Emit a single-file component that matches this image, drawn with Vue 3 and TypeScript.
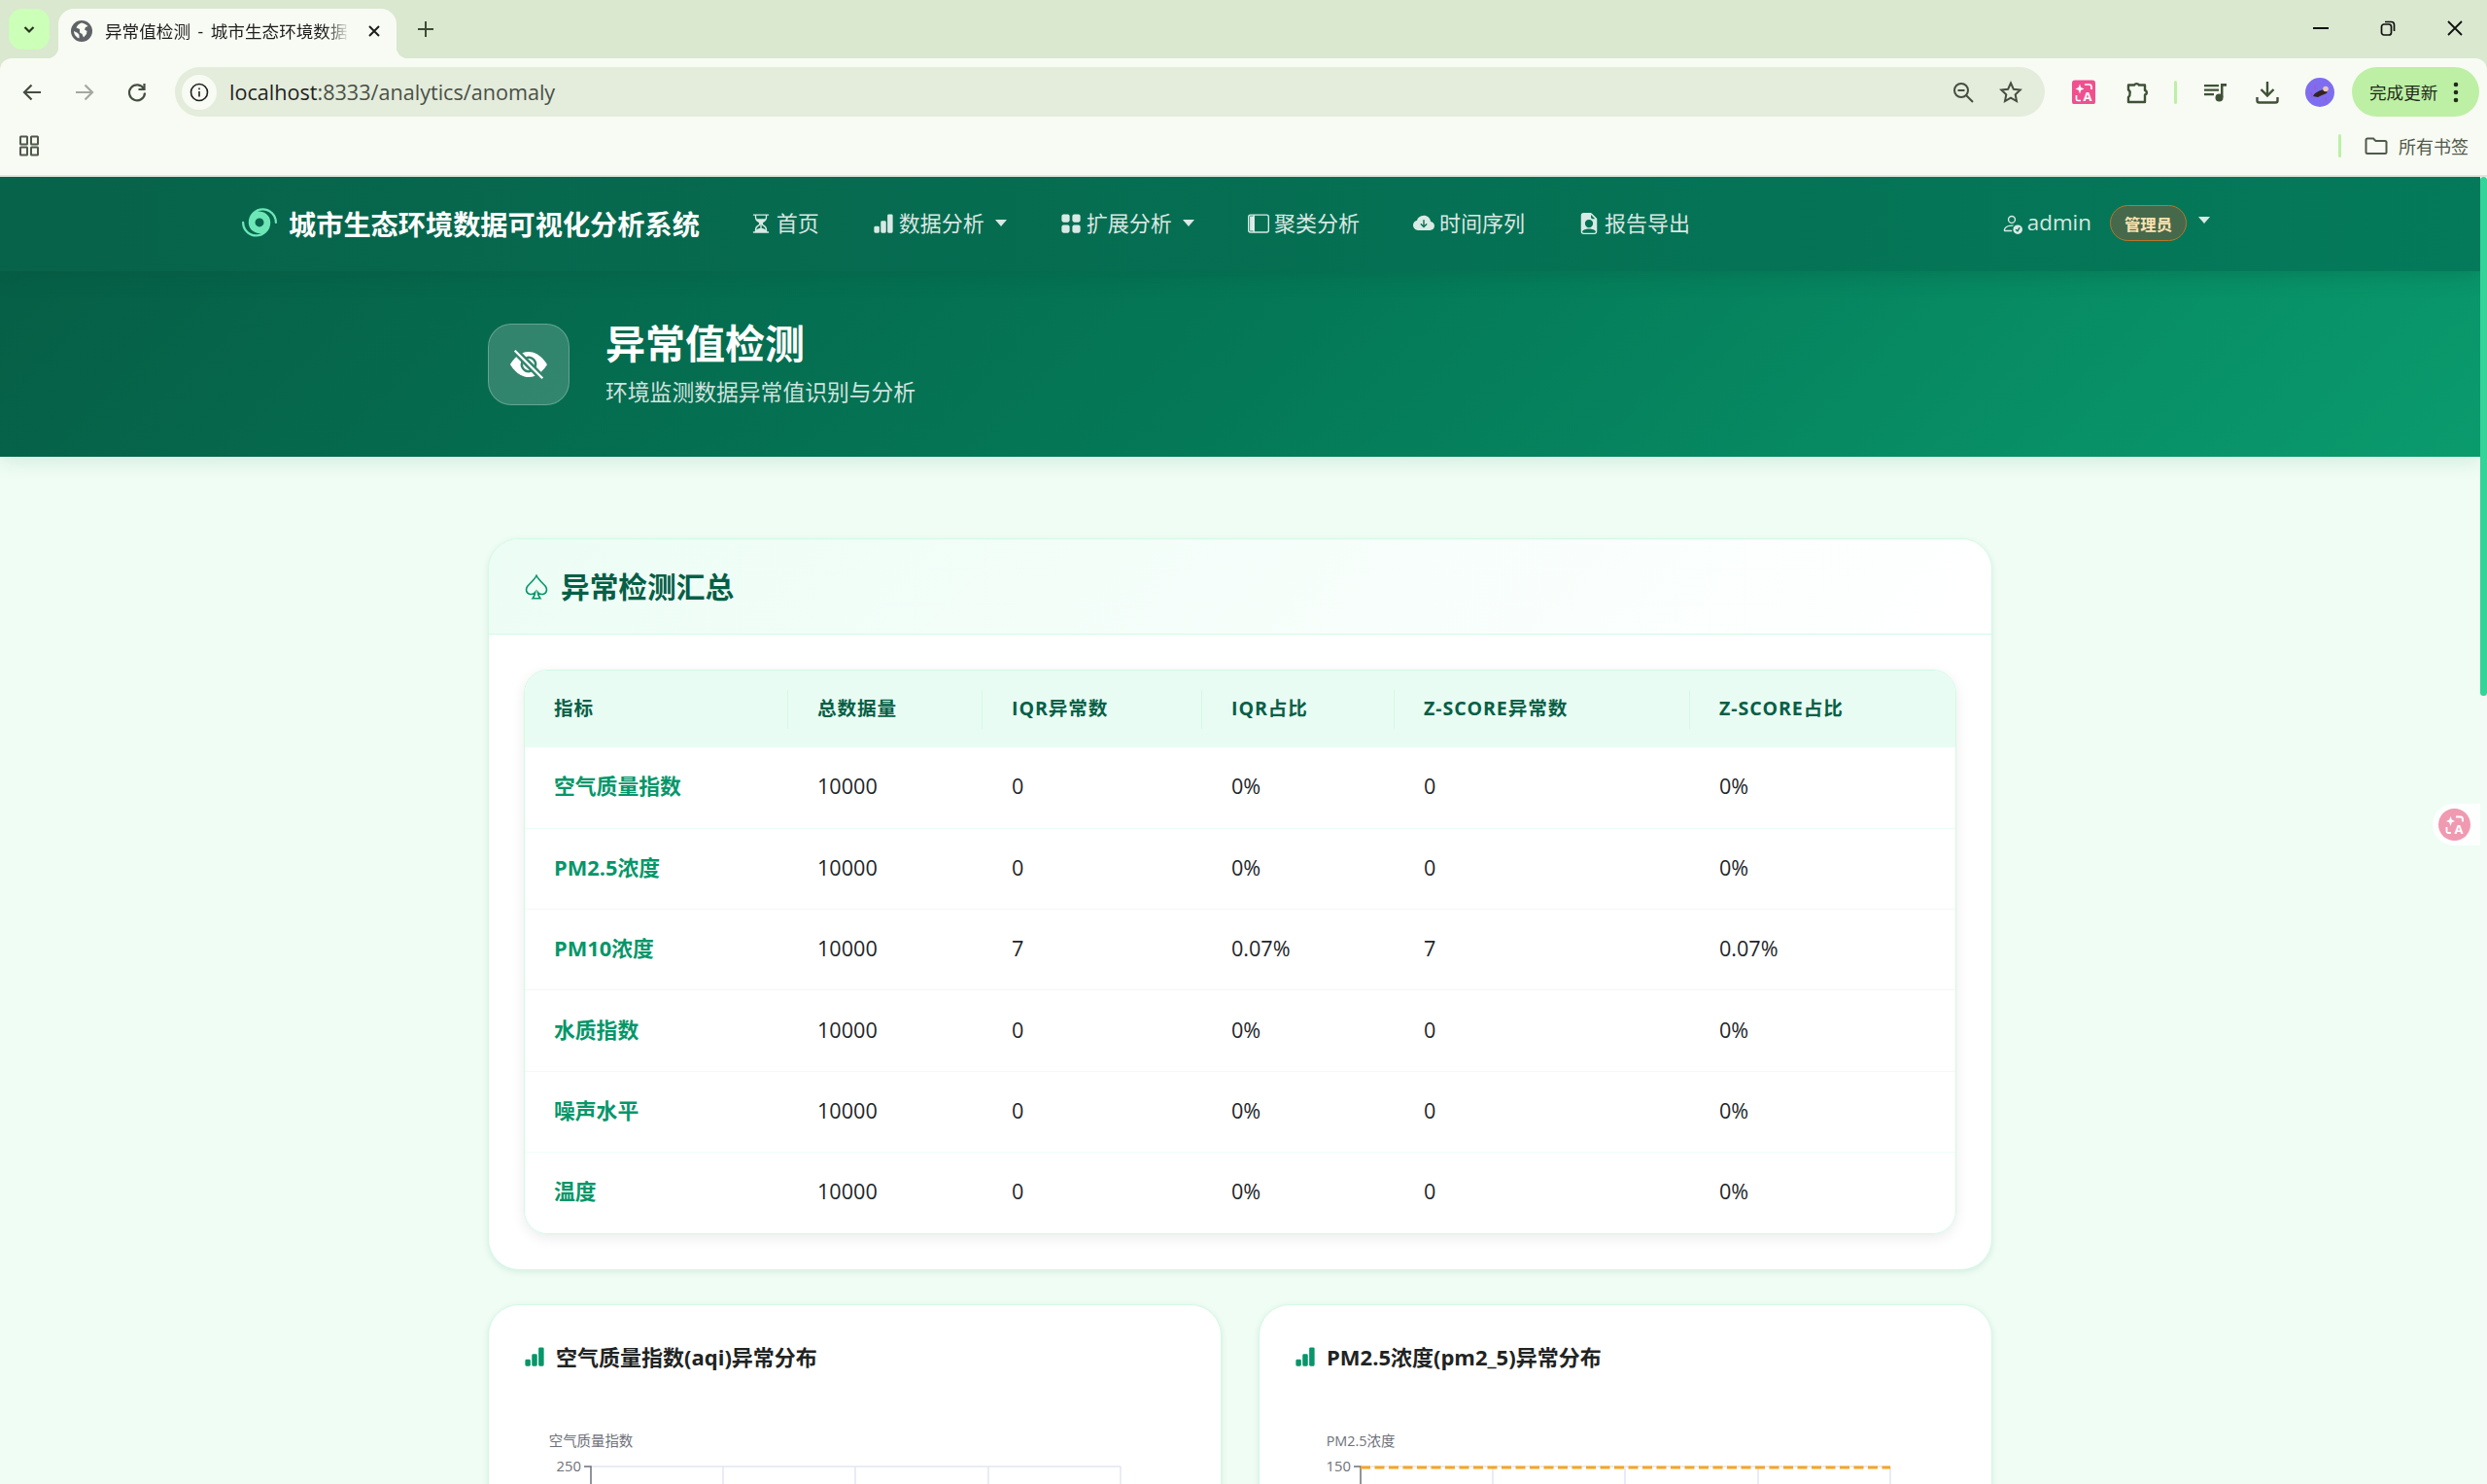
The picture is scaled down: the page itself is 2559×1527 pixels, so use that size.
<script setup lang="ts">
interface NavItem {
  label: string
  icon: string[]
  caret?: boolean
}

const icons = {
  hourglass: ['M2.5 15a.5.5 0 1 1 0-1h1v-1a4.5 4.5 0 0 1 2.557-4.06c.29-.139.443-.377.443-.59v-.7c0-.213-.154-.451-.443-.59A4.5 4.5 0 0 1 3.5 3V2h-1a.5.5 0 0 1 0-1h11a.5.5 0 0 1 0 1h-1v1a4.5 4.5 0 0 1-2.557 4.06c-.29.139-.443.377-.443.59v.7c0 .213.154.451.443.59A4.5 4.5 0 0 1 12.5 13v1h1a.5.5 0 0 1 0 1zm2-13v1c0 .537.12 1.045.337 1.5h6.326c.216-.455.337-.963.337-1.5V2zm3 6.35c0 .701-.478 1.236-1.011 1.492A3.5 3.5 0 0 0 4.5 13s.866-1.299 3-1.48zm1 0v3.17c2.134.181 3 1.48 3 1.48a3.5 3.5 0 0 0-1.989-3.158C8.978 9.586 8.5 9.052 8.5 8.351z'],
  bars: ['M1 11a1 1 0 0 1 1-1h2a1 1 0 0 1 1 1v3a1 1 0 0 1-1 1H2a1 1 0 0 1-1-1zm5-4a1 1 0 0 1 1-1h2a1 1 0 0 1 1 1v7a1 1 0 0 1-1 1H7a1 1 0 0 1-1-1zm5-5a1 1 0 0 1 1-1h2a1 1 0 0 1 1 1v12a1 1 0 0 1-1 1h-2a1 1 0 0 1-1-1z'],
  grid: ['M1 2.5A1.5 1.5 0 0 1 2.5 1h3A1.5 1.5 0 0 1 7 2.5v3A1.5 1.5 0 0 1 5.5 7h-3A1.5 1.5 0 0 1 1 5.5zm8 0A1.5 1.5 0 0 1 10.5 1h3A1.5 1.5 0 0 1 15 2.5v3A1.5 1.5 0 0 1 13.5 7h-3A1.5 1.5 0 0 1 9 5.5zm-8 8A1.5 1.5 0 0 1 2.5 9h3A1.5 1.5 0 0 1 7 10.5v3A1.5 1.5 0 0 1 5.5 15h-3A1.5 1.5 0 0 1 1 13.5zm8 0A1.5 1.5 0 0 1 10.5 9h3a1.5 1.5 0 0 1 1.5 1.5v3a1.5 1.5 0 0 1-1.5 1.5h-3A1.5 1.5 0 0 1 9 13.5z'],
  sidebar: ['M0 3a2 2 0 0 1 2-2h12a2 2 0 0 1 2 2v10a2 2 0 0 1-2 2H2a2 2 0 0 1-2-2zm5-1v12h9a1 1 0 0 0 1-1V3a1 1 0 0 0-1-1zM4 2H2a1 1 0 0 0-1 1v10a1 1 0 0 0 1 1h2z', 'M1.5 2.5h3v11h-3z'],
  cloud: ['M8 2a5.53 5.53 0 0 0-3.594 1.342c-.766.66-1.321 1.52-1.464 2.383C1.266 6.095 0 7.555 0 9.318 0 11.366 1.708 13 3.781 13h8.906C14.502 13 16 11.57 16 9.773c0-1.636-1.242-2.969-2.834-3.194C12.923 3.999 10.69 2 8 2m2.354 6.854-2 2a.5.5 0 0 1-.708 0l-2-2a.5.5 0 1 1 .708-.708L7.5 9.293V5.5a.5.5 0 0 1 1 0v3.793l1.146-1.147a.5.5 0 0 1 .708.708'],
  filePerson: ['M9.293 0H4a2 2 0 0 0-2 2v12a2 2 0 0 0 2 2h8a2 2 0 0 0 2-2V4.707A1 1 0 0 0 13.707 4L10 .293A1 1 0 0 0 9.293 0M9.5 3.5v-2l3 3h-2a1 1 0 0 1-1-1M11 8a3 3 0 1 1-6 0 3 3 0 0 1 6 0m2 5.755V14a1 1 0 0 1-1 1H4a1 1 0 0 1-1-1v-.245S4 12 8 12s5 1.755 5 1.755'],
  personCheck: ['M12.5 16a3.5 3.5 0 1 0 0-7 3.5 3.5 0 0 0 0 7m1.679-4.493-1.335 2.226a.75.75 0 0 1-1.174.144l-.774-.773a.5.5 0 0 1 .708-.708l.547.548 1.17-1.951a.5.5 0 1 1 .858.514M11 5a3 3 0 1 1-6 0 3 3 0 0 1 6 0M8 7a2 2 0 1 0 0-4 2 2 0 0 0 0 4', 'M8.256 14a4.5 4.5 0 0 1-.229-1.004H3c.001-.246.154-.986.832-1.664C4.484 10.68 5.711 10 8 10q.39 0 .74.025c.226-.341.496-.65.804-.918Q8.844 9.002 8 9c-5 0-6 3-6 4s1 1 1 1z'],
  hurricane: ['M6.999 2.6A5.5 5.5 0 0 1 15 7.5a.5.5 0 0 0 1 0 6.5 6.5 0 1 0-13 0 5 5 0 0 0 6.001 4.9A5.5 5.5 0 0 1 1 7.5a.5.5 0 0 0-1 0 6.5 6.5 0 1 0 13 0 5 5 0 0 0-6.001-4.9M10 7.5a2 2 0 1 1-4 0 2 2 0 0 1 4 0'],
  eyeSlash: ['m10.79 12.912-1.614-1.615a3.5 3.5 0 0 1-4.474-4.474l-2.06-2.06C.938 6.278 0 8 0 8s3 5.5 8 5.5a7 7 0 0 0 2.79-.588M5.21 3.088A7 7 0 0 1 8 2.5c5 0 8 5.5 8 5.5s-.939 1.721-2.641 3.238l-2.062-2.062a3.5 3.5 0 0 0-4.474-4.474L5.21 3.089z', 'M5.525 7.646a2.5 2.5 0 0 0 2.829 2.829zm4.95.708-2.829-2.83a2.5 2.5 0 0 1 2.829 2.829zm3.171 6-12-12 .708-.708 12 12z']
}

const navItems: NavItem[] = [
  { label: '首页', icon: icons.hourglass },
  { label: '数据分析', icon: icons.bars, caret: true },
  { label: '扩展分析', icon: icons.grid, caret: true },
  { label: '聚类分析', icon: icons.sidebar },
  { label: '时间序列', icon: icons.cloud },
  { label: '报告导出', icon: icons.filePerson }
]

const columns = ['指标', '总数据量', 'IQR异常数', 'IQR占比', 'Z-SCORE异常数', 'Z-SCORE占比']

const rows = [
  ['空气质量指数', '10000', '0', '0%', '0', '0%'],
  ['PM2.5浓度', '10000', '0', '0%', '0', '0%'],
  ['PM10浓度', '10000', '7', '0.07%', '7', '0.07%'],
  ['水质指数', '10000', '0', '0%', '0', '0%'],
  ['噪声水平', '10000', '0', '0%', '0', '0%'],
  ['温度', '10000', '0', '0%', '0', '0%']
]

const charts = [
  { title: '空气质量指数(aqi)异常分布', axis: '空气质量指数', top: '250', limit: false },
  { title: 'PM2.5浓度(pm2_5)异常分布', axis: 'PM2.5浓度', top: '150', limit: true }
]

const gridLines = [204, 340, 477, 613]
</script>

<template>
  <div class="window">
    <header class="chrome">
      <div class="tabstrip">
        <button class="tab-search">
          <svg viewBox="0 0 16 16" width="16" height="16"><path d="M3.5 6 8 10.5 12.500 6" fill="none" stroke="#26331f" stroke-width="2.200" /></svg>
        </button>
        <div class="tab">
          <svg class="favicon" viewBox="0 0 22 22" width="22" height="22">
            <circle cx="11" cy="11" r="11" fill="#5f6368" />
            <path d="M11 2.500c2 .5 5 1.500 6.500 3.500l-2.500 1-1 2.500 2.500 1.500-.5 3-3 3.500-1.500-3.500-2.500-1.500V9L5.500 7.500C6.500 5 8.500 3 11 2.500z" fill="#f8fbf3" />
            <path d="M3 11l4 2 1.500 2v3.500C5.500 17.500 3 14.500 3 11z" fill="#f8fbf3" />
          </svg>
          <span class="tab-title">异常值检测 - 城市生态环境数据</span>
          <svg class="tab-close" viewBox="0 0 12 12" width="12" height="12"><path d="M1 1l10 10M11 1 1 11" stroke="#1f1f1f" stroke-width="2" /></svg>
        </div>
        <svg class="new-tab" viewBox="0 0 16 16" width="16" height="16"><path d="M8 0v16M0 8h16" stroke="#3e4a38" stroke-width="2" /></svg>
        <div class="win-controls">
          <svg viewBox="0 0 16 16" width="16" height="16"><path d="M0 8h16" stroke="#111" stroke-width="2" /></svg>
          <svg viewBox="0 0 16 16" width="16" height="16" fill="none" stroke="#111" stroke-width="1.700"><rect x="1.500" y="4" width="10" height="11" rx="2.500" /><path d="M5 1.500h6.500a3 3 0 0 1 3 3V11" /></svg>
          <svg viewBox="0 0 16 16" width="16" height="16"><path d="M1 1l14 14M15 1 1 15" stroke="#111" stroke-width="1.800" /></svg>
        </div>
      </div>

      <div class="toolbar">
        <button class="tool">
          <svg viewBox="0 0 24 24" width="24" height="24" fill="none" stroke="#454d40" stroke-width="2.200"><path d="M21 12H4M11.500 4.500 4 12l7.500 7.500" /></svg>
        </button>
        <button class="tool">
          <svg viewBox="0 0 24 24" width="24" height="24" fill="none" stroke="#a3a8a0" stroke-width="2.200"><path d="M3 12h17M12.500 4.500 20 12l-7.500 7.500" /></svg>
        </button>
        <button class="tool">
          <svg viewBox="0 0 24 24" width="24" height="24" fill="none" stroke="#454d40" stroke-width="2.200"><path d="M19 8.500A8 8 0 1 0 20 12.500" /><path d="M19.500 3v6h-6" /></svg>
        </button>
        <div class="address">
          <span class="info-badge">
            <svg viewBox="0 0 20 20" width="20" height="20" fill="none" stroke="#1f1f1f" stroke-width="1.600"><circle cx="10" cy="10" r="8.500" /><path d="M10 9v5.500M10 5.500v1.800" /></svg>
          </span>
          <span class="url"><span class="url-host">localhost</span>:8333/analytics/anomaly</span>
          <svg class="addr-zoom" viewBox="0 0 22 22" width="22" height="22" fill="none" stroke="#454d40" stroke-width="2"><circle cx="9" cy="9" r="7" /><path d="M14 14l7 7M5.500 9h7" /></svg>
          <svg class="addr-star" viewBox="0 0 24 24" width="24" height="24" fill="none" stroke="#454d40" stroke-width="2"><path d="M12 2.500l2.900 6.300 6.800.8-5 4.700 1.300 6.800-6-3.400-6 3.400 1.300-6.800-5-4.700 6.800-.8z" /></svg>
        </div>
        <button class="tool ext-first">
          <svg viewBox="0 0 24 24" width="24" height="25">
            <rect width="24" height="25" rx="3" fill="#f0508f" />
            <path d="M8 4l1.300 3.400L12.500 9 9.300 10.300 8 14 6.700 10.300 3.500 9l3.200-1.600z" fill="#fff" />
            <path d="M13 4.500h4.500a2.500 2.500 0 0 1 2.500 2.500v2.500M4.500 15.500v4a1.500 1.500 0 0 0 1.500 1.500h3" fill="none" stroke="#fff" stroke-width="1.700" />
            <text x="16" y="21.500" class="ext-letter">A</text>
          </svg>
        </button>
        <button class="tool">
          <svg viewBox="0 0 24 24" width="24" height="24" fill="none" stroke="#3e5137" stroke-width="2.400" stroke-linejoin="round"><path d="M3 4.500h6a3 3 0 0 1 5 0h6v5.500a2.300 2.300 0 0 1 0 4.500v7.500H3v-5a3.500 3.500 0 0 0 1.500-3.500A3.500 3.500 0 0 0 3 9.500z" /></svg>
        </button>
        <span class="tool-sep"></span>
        <button class="tool">
          <svg viewBox="0 0 24 20" width="24" height="20" fill="#3e5137"><path d="M1 2h15v2.200H1zM1 6.500h15v2.200H1zM1 11h10v2.200H1z" /><path d="M18 1h6v2.800h-3.500V15h-2.500z" /><circle cx="16.500" cy="15.500" r="4" /></svg>
        </button>
        <button class="tool">
          <svg viewBox="0 0 24 24" width="24" height="24" fill="none" stroke="#3e5137" stroke-width="2.400"><path d="M12 1v14M5.500 9 12 15.500 18.500 9M1.500 17v3.500a2 2 0 0 0 2 2h17a2 2 0 0 0 2-2V17" /></svg>
        </button>
        <button class="tool">
          <svg viewBox="0 0 30 30" width="30" height="30">
            <circle cx="15" cy="15" r="15" fill="#7f6df0" />
            <path d="M8 19c2-4 7-6 11-7l1-1 3 1-1 4-5 2-4 2z" fill="#33241f" />
            <circle cx="21" cy="11.500" r="2.800" fill="#e8c8b4" />
            <path d="M10 7v5M21 20v4M6 15l1 5" stroke="#a058c8" stroke-width="1.400" />
          </svg>
        </button>
        <div class="update-btn">
          <span>完成更新</span>
          <svg viewBox="0 0 6 22" width="6" height="22" fill="#1f2b1a"><circle cx="3" cy="3" r="2.300" /><circle cx="3" cy="11" r="2.300" /><circle cx="3" cy="19" r="2.300" /></svg>
        </div>
      </div>

      <div class="bookmarks">
        <svg viewBox="0 0 20 22" width="20" height="22" fill="none" stroke="#50594b" stroke-width="2"><rect x="1" y="1.500" width="7" height="8" rx=".5" /><rect x="12" y="1.500" width="7" height="8" rx=".5" /><rect x="1" y="12.500" width="7" height="8" rx=".5" /><rect x="12" y="12.500" width="7" height="8" rx=".5" /></svg>
        <span class="bm-sep"></span>
        <svg class="bm-folder" viewBox="0 0 24 18" width="24" height="18" fill="none" stroke="#50594b" stroke-width="2"><path d="M1.500 3a1.500 1.500 0 0 1 1.500-1.500h6l2.500 2.500H21A1.500 1.500 0 0 1 22.500 5.500v10A1.500 1.500 0 0 1 21 17H3a1.500 1.500 0 0 1-1.500-1.500z" /></svg>
        <span class="bm-label">所有书签</span>
      </div>
    </header>

    <div class="viewport">
      <div class="page">
        <nav class="topnav">
          <svg class="brand-icon" viewBox="0 0 16 16" width="36" height="36"><path v-for="d in icons.hurricane" :key="d" :d="d" /></svg>
          <span class="brand">城市生态环境数据可视化分析系统</span>
          <div class="nav-links">
            <a v-for="item in navItems" :key="item.label" class="nav-link">
              <svg viewBox="0 0 16 16" width="22" height="22"><path v-for="d in item.icon" :key="d" :d="d" /></svg>
              <span class="nav-label">{{ item.label }}</span>
              <i v-if="item.caret" class="caret"></i>
            </a>
          </div>
          <div class="user">
            <svg viewBox="0 0 16 16" width="22" height="22"><path v-for="d in icons.personCheck" :key="d" :d="d" /></svg>
            <span class="user-name">admin</span>
            <span class="role">管理员</span>
            <i class="caret user-caret"></i>
          </div>
        </nav>

        <section class="hero">
          <div class="container hero-inner">
            <div class="hero-icon">
              <svg viewBox="0 0 16 16" width="38" height="38"><path v-for="d in icons.eyeSlash" :key="d" :d="d" /></svg>
            </div>
            <div class="hero-text">
              <h1>异常值检测</h1>
              <p>环境监测数据异常值识别与分析</p>
            </div>
          </div>
        </section>

        <main class="container content">
          <section class="card summary">
            <div class="card-header">
              <svg viewBox="0 0 16 16" width="26" height="26"><path d="M8 .8C6.900 3.400 3.600 5.800 2.300 7.600 1 9.400 1.400 12.200 4 12.600c1.400.2 2.600-.4 3.200-1.300-.1 1.500-.8 2.800-1.600 3.900h4.800c-.8-1.100-1.500-2.400-1.600-3.900.6.900 1.800 1.500 3.200 1.300 2.600-.4 3-3.200 1.700-5C12.400 5.800 9.100 3.400 8 .8z" /></svg>
              <h2>异常检测汇总</h2>
            </div>
            <div class="card-body">
              <div class="table-wrap">
                <table>
                  <colgroup>
                    <col style="width: 271px" />
                    <col style="width: 200px" />
                    <col style="width: 226px" />
                    <col style="width: 198px" />
                    <col style="width: 304px" />
                    <col />
                  </colgroup>
                  <thead>
                    <tr>
                      <th v-for="col in columns" :key="col">{{ col }}</th>
                    </tr>
                  </thead>
                  <tbody>
                    <tr v-for="row in rows" :key="row[0]">
                      <td v-for="(cell, i) in row" :key="i" :class="{ metric: i === 0 }">{{ cell }}</td>
                    </tr>
                  </tbody>
                </table>
              </div>
            </div>
          </section>

          <div class="chart-grid">
            <section v-for="chart in charts" :key="chart.title" class="card chart-card">
              <div class="chart-title">
                <svg viewBox="0 0 16 16" width="22" height="22"><path v-for="d in icons.bars" :key="d" :d="d" /></svg>
                <h3>{{ chart.title }}</h3>
              </div>
              <svg class="chart" viewBox="0 0 680 320" width="680" height="320">
                <text x="68" y="48" class="axis-name">{{ chart.axis }}</text>
                <text x="58" y="74" class="axis-value">{{ chart.top }}</text>
                <path d="M68 69H613" class="grid-line" />
                <path v-for="x in gridLines" :key="x" :d="`M${x} 69V320`" class="grid-line" />
                <path d="M61 69H68V320" class="axis-line" />
                <path v-if="chart.limit" d="M68 70H613" class="limit-line" />
              </svg>
            </section>
          </div>
        </main>
      </div>

      <div class="scrollbar"><div class="thumb"></div></div>

      <div class="float-translate">
        <span class="float-circle">
          <svg viewBox="0 0 24 24" width="24" height="24">
            <path d="M7.500 3l1.300 3.400L12 8 8.800 9.300 7.500 13 6.200 9.300 3 8l3.200-1.600z" fill="#fff" />
            <path d="M13 3.500h4.500A2.500 2.500 0 0 1 20 6v2.500M3.500 14v4.500A1.500 1.500 0 0 0 5 20h3" fill="none" stroke="#fff" stroke-width="1.800" />
            <text x="16" y="21" class="ext-letter">A</text>
          </svg>
        </span>
      </div>
    </div>
  </div>
</template>

<style>
html,
body {
  margin: 0;
  height: 100%;
  overflow: hidden;
}
</style>

<style scoped>
.window {
  height: 100vh;
  display: flex;
  flex-direction: column;
  overflow: hidden;
  font-family: "Open Sans", "Noto Sans CJK SC", sans-serif;
  color: #212529;
}

h1,
h2,
h3,
p {
  margin: 0;
}

button {
  border: none;
  background: none;
  padding: 0;
}

/* browser frame */
.chrome {
  flex: none;
  background: #d9e8cf;
}

.tabstrip {
  height: 60px;
  display: flex;
  align-items: flex-start;
  padding-left: 9px;
}

.tab-search {
  width: 42px;
  height: 42px;
  margin-top: 9px;
  border-radius: 14px;
  background: #ccffb8;
  display: flex;
  align-items: center;
  justify-content: center;
}

.tab {
  position: relative;
  width: 348px;
  height: 51px;
  margin: 9px 0 0 9px;
  padding: 0 0 6px 13px;
  box-sizing: border-box;
  background: #f8fbf3;
  border-radius: 16px 16px 0 0;
  display: flex;
  align-items: center;
  font-size: 17.6px;
  color: #1f1f1f;
}

.tab::before,
.tab::after {
  content: "";
  position: absolute;
  bottom: 0;
  width: 12px;
  height: 12px;
}

.tab::before {
  left: -12px;
  background: radial-gradient(circle at 0 0, transparent 12px, #f8fbf3 12.500px);
}

.tab::after {
  right: -12px;
  background: radial-gradient(circle at 100% 0, transparent 12px, #f8fbf3 12.500px);
}

.tab-title {
  width: 252px;
  margin-left: 13px;
  white-space: nowrap;
  word-spacing: 3px;
  -webkit-mask-image: linear-gradient(to right, #000 90%, transparent);
  mask-image: linear-gradient(to right, #000 90%, transparent);
}

.tab-close {
  margin-left: 19px;
}

.new-tab {
  margin: 22px 0 0 22px;
}

.win-controls {
  margin-left: auto;
  padding: 21px 25px 0 0;
  display: flex;
  gap: 53px;
}

.toolbar {
  height: 62px;
  box-sizing: border-box;
  padding: 9px 8px 2px 6px;
  display: flex;
  align-items: center;
  background: #f8fbf3;
  border-radius: 12px 12px 0 0;
}

.tool {
  flex: none;
  width: 54px;
  height: 51px;
  display: flex;
  align-items: center;
  justify-content: center;
}

.address {
  flex: 1;
  height: 51px;
  margin-left: 12px;
  padding: 0 23px 0 7px;
  display: flex;
  align-items: center;
  background: #e4ecdc;
  border-radius: 26px;
}

.info-badge {
  width: 36px;
  height: 36px;
  border-radius: 50%;
  background: #f8fbf3;
  display: flex;
  align-items: center;
  justify-content: center;
}

.url {
  margin-left: 13px;
  font-size: 21.600px;
  color: #4a5046;
}

.url-host {
  color: #1f1f1f;
}

.addr-zoom {
  margin-left: auto;
}

.addr-star {
  margin-left: 26px;
}

.ext-first {
  margin: 0 1px 0 13px;
}

.ext-letter {
  font: 700 13px "Open Sans", sans-serif;
  fill: #fff;
  text-anchor: middle;
}

.tool-sep {
  flex: none;
  width: 3px;
  height: 24px;
  margin: 0 12.500px 0 10.500px;
  background: #bdf0a5;
  border-radius: 2px;
}

.update-btn {
  flex: none;
  width: 131px;
  height: 51px;
  margin-left: 6px;
  padding-left: 18px;
  box-sizing: border-box;
  border-radius: 26px;
  background: #bdf0a5;
  display: flex;
  align-items: center;
  gap: 16px;
  font-size: 17.600px;
  color: #1f2b1a;
}

.bookmarks {
  height: 60px;
  box-sizing: border-box;
  padding: 0 19px 2px 20px;
  display: flex;
  align-items: center;
  background: #f8fbf3;
  border-bottom: 2px solid #e2e6da;
}

.bm-sep {
  width: 3px;
  height: 24px;
  margin-left: auto;
  background: #bdf0a5;
  border-radius: 2px;
}

.bm-folder {
  margin-left: 24px;
}

.bm-label {
  margin-left: 11px;
  font-size: 18px;
  color: #50594b;
}

/* page */
.viewport {
  position: relative;
  flex: 1;
  min-height: 0;
  display: flex;
}

.page {
  flex: 1;
  min-width: 0;
  overflow: hidden;
  background: #effdf4;
}

.scrollbar {
  flex: none;
  width: 7px;
  background: #f2fbf5;
}

.thumb {
  height: 534px;
  background: #34d399;
  border-radius: 4px;
}

.float-translate {
  position: absolute;
  top: 645px;
  right: 7px;
  width: 49px;
  height: 43px;
  box-sizing: border-box;
  padding-left: 6px;
  border-radius: 22px 0 0 22px;
  background: rgba(255, 255, 255, 0.85);
  display: flex;
  align-items: center;
}

.float-circle {
  width: 33px;
  height: 33px;
  border-radius: 50%;
  background: #f09ab2;
  display: flex;
  align-items: center;
  justify-content: center;
}

.topnav {
  position: relative;
  z-index: 2;
  height: 97px;
  box-sizing: border-box;
  padding: 0 278px 2px 249px;
  display: flex;
  align-items: center;
  background: linear-gradient(90deg, #07634a, #047a5a);
  box-shadow: 0 4px 20px rgba(6, 78, 59, 0.3);
  color: rgba(255, 255, 255, 0.85);
  font-size: 22px;
}

.topnav svg {
  fill: currentColor;
  flex: none;
}

.brand-icon {
  color: #6ee7b7;
}

.brand {
  margin-left: 12px;
  font-size: 28.200px;
  font-weight: 700;
  color: #fff;
  white-space: nowrap;
}

.nav-links {
  margin-left: 52px;
  display: flex;
  gap: 55px;
}

.nav-link {
  display: flex;
  align-items: center;
  gap: 5px;
  white-space: nowrap;
}

.nav-label {
  padding-bottom: 3px;
}

.caret {
  width: 0;
  height: 0;
  margin-left: 6px;
  border-top: 7px solid currentColor;
  border-left: 6px solid transparent;
  border-right: 6px solid transparent;
}

.user {
  margin-left: auto;
  display: flex;
  align-items: center;
  font-size: 22.400px;
}

.user-name {
  margin-left: 5px;
  padding-bottom: 2px;
  line-height: 30px;
}

.role {
  width: 79px;
  height: 37px;
  margin-left: 19px;
  box-sizing: border-box;
  border-radius: 19px;
  border: 1px solid #b8762b;
  background: #46694b;
  color: #fde3b0;
  font-size: 16.400px;
  font-weight: 700;
  display: flex;
  align-items: center;
  justify-content: center;
}

.user-caret {
  margin: -6px 0 0 12px;
}

.hero {
  height: 191px;
  display: flex;
  align-items: center;
  background: linear-gradient(135deg, #065f46 0%, #047857 50%, #0a9b6d 100%);
  box-shadow: 0 4px 20px rgba(6, 95, 70, 0.12);
  color: #fff;
}

.container {
  width: 1548px;
  margin: 0 auto;
}

.hero-inner {
  display: flex;
  align-items: center;
  gap: 37px;
}

.hero-icon {
  width: 84px;
  height: 84px;
  box-sizing: border-box;
  border-radius: 24px;
  border: 1px solid rgba(255, 255, 255, 0.25);
  background: rgba(255, 255, 255, 0.18);
  display: flex;
  align-items: center;
  justify-content: center;
}

.hero-icon svg {
  fill: #fff;
}

.hero-text {
  padding-bottom: 2px;
}

h1 {
  font-size: 41px;
  line-height: 52px;
  font-weight: 700;
}

.hero p {
  margin-top: 8px;
  font-size: 22.800px;
  line-height: 34px;
  color: rgba(255, 255, 255, 0.82);
}

.content {
  padding-top: 84px;
}

.card {
  box-sizing: border-box;
  background: #fff;
  border: 1px solid #d1fae5;
  border-radius: 32px;
  box-shadow: 0 2px 6px rgba(6, 95, 70, 0.1);
  overflow: hidden;
}

.card-header {
  height: 98px;
  box-sizing: border-box;
  padding: 0 36px;
  display: flex;
  align-items: center;
  gap: 12px;
  background: linear-gradient(135deg, #ecfdf5, #fff);
  border-bottom: 1px solid #d1fae5;
}

.card-header svg {
  fill: none;
  stroke: #059669;
  stroke-width: 1;
  flex: none;
}

h2 {
  font-size: 29.700px;
  font-weight: 700;
  color: #065f46;
  padding-bottom: 2px;
}

.card-body {
  padding: 36px 36px 36px;
}

.table-wrap {
  border: 1px solid #d1fae5;
  border-radius: 24px;
  overflow: hidden;
  box-shadow: 0 4px 14px rgba(0, 0, 0, 0.08);
}

table {
  width: 100%;
  border-collapse: collapse;
  table-layout: fixed;
}

th {
  position: relative;
  height: 79px;
  box-sizing: border-box;
  padding: 0 0 5px 30px;
  text-align: left;
  background: #e9fcf3;
  color: #065f46;
  font-size: 19.600px;
  font-weight: 700;
  letter-spacing: 0.9px;
}

th:not(:last-child)::after {
  content: "";
  position: absolute;
  top: 20px;
  right: 0;
  width: 1px;
  height: 40px;
  background: #d1fae5;
}

td {
  height: 83.300px;
  padding: 0 0 3px 30px;
  box-sizing: border-box;
  font-size: 21.600px;
  border-top: 1px solid #ecfdf5;
}

tbody tr:first-child td {
  border-top: none;
}

td.metric {
  padding-bottom: 5px;
  color: #059669;
  font-weight: 700;
  font-size: 21.800px;
}

.chart-grid {
  margin-top: 35px;
  display: grid;
  grid-template-columns: 755px 755px;
  gap: 38px;
}

.chart-card {
  padding: 36px;
  min-width: 0;
}

.chart-title {
  height: 34px;
  display: flex;
  align-items: center;
  gap: 11px;
}

.chart-title svg {
  fill: #059669;
  flex: none;
}

h3 {
  font-size: 22px;
  font-weight: 700;
  color: #1f2423;
  white-space: nowrap;
  padding-bottom: 2px;
}

.chart {
  display: block;
  margin-top: 27px;
}

.chart-card:first-child .chart {
  margin-left: 1px;
}

.axis-name {
  font-size: 14.400px;
  fill: #6e7079;
  text-anchor: middle;
}

.axis-value {
  font-size: 14.800px;
  fill: #6e7079;
  text-anchor: end;
}

.grid-line {
  stroke: #e0e6f1;
  stroke-width: 1.500;
  fill: none;
}

.axis-line {
  stroke: #6e7079;
  stroke-width: 1.500;
  fill: none;
}

.limit-line {
  stroke: #f5a623;
  stroke-width: 3;
  stroke-dasharray: 10 4.500;
  fill: none;
}
</style>
